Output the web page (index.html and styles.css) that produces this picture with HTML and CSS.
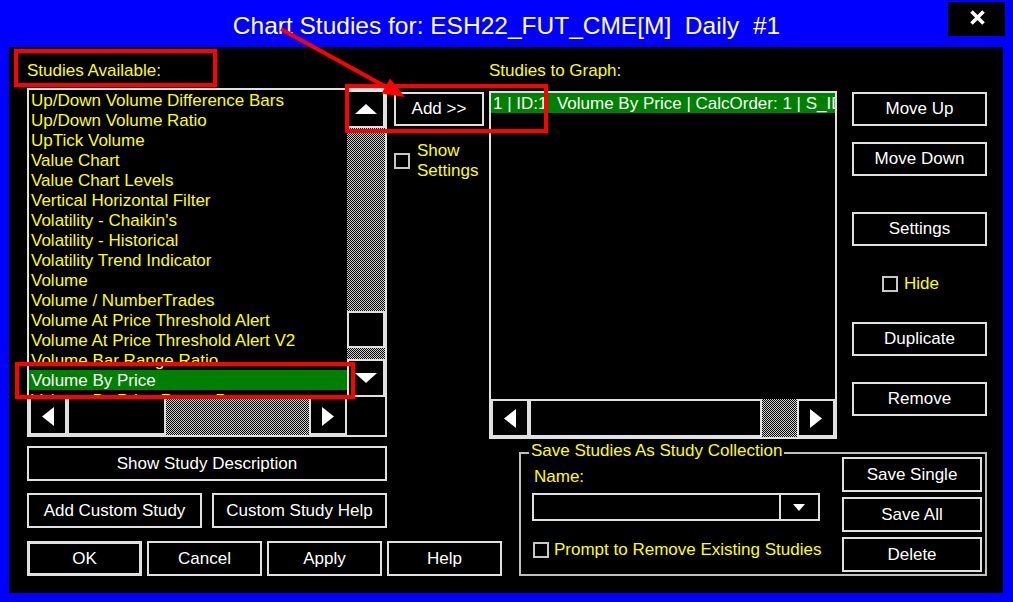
FILE: index.html
```html
<!DOCTYPE html>
<html>
<head>
<meta charset="utf-8">
<title>Chart Studies</title>
<link rel="stylesheet" href="styles.css">
</head>
<body>
<div class="window">
  <div class="titlebar">
    <div></div>
    <div class="title">Chart Studies for: ESH22_FUT_CME[M]  Daily  #1</div>
    <div class="close-cell">
      <div class="close"><svg width="17" height="15" viewBox="0 0 17 15"><path d="M2.5 1.5 L14.5 13.5 M14.5 1.5 L2.5 13.5" stroke="#fff" stroke-width="3.6" fill="none"/></svg></div>
    </div>
  </div>

  <div class="panel">
    <div class="top">
      <div class="col-left">
        <div class="label-box">Studies Available:</div>
        <div class="listbox left-list">
          <ul class="items">
            <li>Up/Down Volume Difference Bars</li>
            <li>Up/Down Volume Ratio</li>
            <li>UpTick Volume</li>
            <li>Value Chart</li>
            <li>Value Chart Levels</li>
            <li>Vertical Horizontal Filter</li>
            <li>Volatility - Chaikin's</li>
            <li>Volatility - Historical</li>
            <li>Volatility Trend Indicator</li>
            <li>Volume</li>
            <li>Volume / NumberTrades</li>
            <li>Volume At Price Threshold Alert</li>
            <li>Volume At Price Threshold Alert V2</li>
            <li>Volume Bar Range Ratio</li>
            <li class="sel">Volume By Price</li>
            <li>Volume By Price Range Percentage</li>
          </ul>
          <div class="vscroll">
            <div class="sbtn"><svg width="22" height="10" viewBox="0 0 22 10"><polygon points="11,0 22,10 0,10" fill="#fff"/></svg></div>
            <div class="track grow"></div>
            <div class="vthumb"></div>
            <div class="track vsmall"></div>
            <div class="sbtn"><svg width="22" height="10" viewBox="0 0 22 10"><polygon points="0,0 22,0 11,10" fill="#fff"/></svg></div>
          </div>
          <div class="hscroll">
            <div class="sbtn"><svg width="12" height="19" viewBox="0 0 12 19"><polygon points="12,0 12,19 0,9.5" fill="#fff"/></svg></div>
            <div class="hthumb thumb-left"></div>
            <div class="track grow"></div>
            <div class="sbtn"><svg width="12" height="19" viewBox="0 0 12 19"><polygon points="0,0 12,9.5 0,19" fill="#fff"/></svg></div>
          </div>
          <div class="corner"></div>
        </div>
      </div>

      <div class="col-mid">
        <div class="btn add-btn">Add &gt;&gt;</div>
        <div class="check-row show-settings">
          <span class="checkbox"></span>
          <span class="check-label">Show<br>Settings</span>
        </div>
      </div>

      <div class="col-graph">
        <div class="label graph-label">Studies to Graph:</div>
        <div class="listbox right-list">
          <div class="items">
            <div class="row sel">1 | ID:1  Volume By Price | CalcOrder: 1 | S_ID: 1</div>
          </div>
          <div class="hscroll">
            <div class="sbtn"><svg width="12" height="19" viewBox="0 0 12 19"><polygon points="12,0 12,19 0,9.5" fill="#fff"/></svg></div>
            <div class="hthumb thumb-wide"></div>
            <div class="track grow"></div>
            <div class="sbtn"><svg width="12" height="19" viewBox="0 0 12 19"><polygon points="0,0 12,9.5 0,19" fill="#fff"/></svg></div>
          </div>
        </div>
      </div>

      <div class="col-btns">
        <div class="btn side-btn b-moveup">Move Up</div>
        <div class="btn side-btn b-movedown">Move Down</div>
        <div class="btn side-btn b-settings">Settings</div>
        <div class="check-row hide-row">
          <span class="checkbox"></span>
          <span class="check-label">Hide</span>
        </div>
        <div class="btn side-btn b-duplicate">Duplicate</div>
        <div class="btn side-btn b-remove">Remove</div>
      </div>
    </div>

    <div class="bottom">
      <div class="bottom-left">
        <div class="btn desc-btn">Show Study Description</div>
        <div class="btn-row row-custom">
          <div class="btn custom-btn">Add Custom Study</div>
          <div class="btn custom-btn">Custom Study Help</div>
        </div>
        <div class="btn-row row-main">
          <div class="btn main-btn default">OK</div>
          <div class="btn main-btn">Cancel</div>
          <div class="btn main-btn">Apply</div>
          <div class="btn main-btn">Help</div>
        </div>
      </div>

      <div class="group">
        <span class="legend">Save Studies As Study Collection</span>
        <div class="group-left">
          <div class="label name-label">Name:</div>
          <div class="combo">
            <div class="combo-text"></div>
            <div class="combo-btn"><svg width="12" height="7" viewBox="0 0 12 7"><polygon points="0,0 12,0 6,7" fill="#fff"/></svg></div>
          </div>
          <div class="check-row prompt-row">
            <span class="checkbox"></span>
            <span class="check-label">Prompt to Remove Existing Studies</span>
          </div>
        </div>
        <div class="group-right">
          <div class="btn save-btn">Save Single</div>
          <div class="btn save-btn">Save All</div>
          <div class="btn save-btn">Delete</div>
        </div>
      </div>
    </div>
  </div>

  <svg class="annot" width="1013" height="602" viewBox="0 0 1013 602">
    <line x1="281" y1="29" x2="388" y2="88" stroke="#ff0000" stroke-width="4"/>
    <polygon points="405,97 381.5,93.5 390,78.5" fill="#ff0000"/>
  </svg>
  <div class="mark mark-add"></div>
  <div class="mark mark-vbp"></div>
</div>
</body>
</html>
```

FILE: styles.css
```css
html, body {
  margin: 0;
  padding: 0;
}
body {
  background: #0000ff;
  font-family: "Liberation Sans", Arial, sans-serif;
  font-size: 17px;
  color: #ffffff;
  overflow: hidden;
}
.window {
  position: relative;
  width: 1013px;
  height: 602px;
  background: #0000ff;
}

/* title bar */
.titlebar {
  height: 47px;
  display: grid;
  grid-template-columns: 1fr auto 1fr;
}
.title {
  padding-top: 12px;
  line-height: 28px;
  font-size: 24.5px;
  color: #ffffff;
  white-space: pre;
}
.close-cell {
  display: flex;
  justify-content: flex-end;
  align-items: flex-start;
}
.close {
  margin-top: 2px;
  margin-right: 8px;
  width: 57px;
  height: 34px;
  background: #000;
  display: flex;
  align-items: center;
  justify-content: center;
  padding-bottom: 3px;
  padding-left: 1px;
  box-sizing: border-box;
}

/* main panel */
.panel {
  margin-left: 9px;
  width: 994px;
  height: 546px;
  background: #000;
}
.top {
  display: flex;
  align-items: flex-start;
  height: 392px;
}
.label {
  color: #ffff00;
  line-height: 20px;
}

/* left column */
.col-left {
  margin-left: 5px;
  width: 373px;
}
.label-box {
  margin-top: 2px;
  width: 203px;
  height: 38px;
  box-sizing: border-box;
  border: 4px solid #ff0000;
  padding-left: 9px;
  padding-top: 5px;
  line-height: 25px;
  color: #ffff00;
}
.listbox {
  box-sizing: border-box;
  border: 2px solid #e0e0e0;
  background: #000;
  display: grid;
}
.left-list {
  margin-top: 1px;
  margin-left: 13px;
  width: 360px;
  height: 349px;
  grid-template-columns: 1fr 38px;
  grid-template-rows: 1fr 38px;
}
.items {
  list-style: none;
  margin: 0;
  padding: 0;
  overflow: hidden;
  line-height: 20px;
  color: #ffff00;
  white-space: nowrap;
}
.items li {
  padding-left: 2px;
  height: 20px;
  line-height: 21px;
}
.items .sel {
  background: #008000;
  color: #ffffff;
}

/* scrollbars */
.vscroll {
  display: flex;
  flex-direction: column;
}
.hscroll {
  display: flex;
}
.sbtn {
  box-sizing: border-box;
  width: 38px;
  height: 38px;
  flex: none;
  border: 2px solid #e0e0e0;
  background: #000;
  display: flex;
  align-items: center;
  justify-content: center;
}
.track {
  background: repeating-conic-gradient(#000 0 25%, #d0d0d0 0 50%) 0 0 / 2px 2px;
}
.track.grow {
  flex: 1;
}
.track.vsmall {
  height: 11px;
}
.vthumb {
  box-sizing: border-box;
  height: 37px;
  border: 2px solid #e0e0e0;
  background: #000;
}
.hthumb {
  box-sizing: border-box;
  height: 38px;
  border: 2px solid #e0e0e0;
  background: #000;
  flex: none;
}
.thumb-left {
  width: 99px;
}
.thumb-wide {
  width: 233px;
}
.corner {
  background: #000;
}

/* middle column */
.col-mid {
  margin-left: 7px;
  width: 90px;
}
.btn {
  box-sizing: border-box;
  border: 2px solid #e0e0e0;
  background: #000;
  color: #fff;
  text-align: center;
  white-space: nowrap;
}
.add-btn {
  margin-top: 45px;
  height: 34px;
  line-height: 30px;
}
.check-row {
  display: flex;
  align-items: center;
  color: #ffff00;
  line-height: 20px;
  white-space: nowrap;
}
.checkbox {
  box-sizing: border-box;
  width: 16px;
  height: 16px;
  border: 2px solid #c8c8c8;
  background: #000;
  flex: none;
}
.show-settings {
  margin-top: 15px;
  gap: 7px;
}

/* right list column */
.col-graph {
  margin-left: 5px;
  width: 348px;
}
.graph-label {
  margin-top: 14px;
}
.right-list {
  margin-top: 10px;
  width: 348px;
  height: 348px;
  grid-template-rows: 1fr 38px;
}
.right-list .row {
  padding-left: 2px;
  height: 20px;
  line-height: 21px;
  white-space: pre;
  overflow: hidden;
}

/* buttons column */
.col-btns {
  margin-left: 15px;
  width: 135px;
}
.side-btn {
  height: 34px;
  line-height: 30px;
}
.b-moveup { margin-top: 45px; }
.b-movedown { margin-top: 16px; }
.b-settings { margin-top: 36px; }
.hide-row {
  margin-top: 28px;
  padding-left: 30px;
  gap: 6px;
}
.b-duplicate { margin-top: 28px; }
.b-remove { margin-top: 26px; }

/* bottom section */
.bottom {
  display: flex;
  align-items: flex-start;
  margin-top: 7px;
}
.bottom-left {
  margin-left: 18px;
  width: 475px;
}
.desc-btn {
  width: 360px;
  height: 35px;
  line-height: 31px;
}
.btn-row {
  display: flex;
}
.row-custom {
  margin-top: 12px;
  gap: 10px;
}
.custom-btn {
  width: 175px;
  height: 35px;
  line-height: 31px;
}
.row-main {
  margin-top: 13px;
  gap: 5px;
}
.main-btn {
  width: 115px;
  height: 35px;
  line-height: 31px;
}
.main-btn.default {
  border-width: 3px;
  line-height: 29px;
}

/* group box */
.group {
  position: relative;
  margin-left: 17px;
  margin-top: 6px;
  width: 468px;
  height: 124px;
  box-sizing: border-box;
  border: 2px solid #c0c0c0;
  padding: 0 3px 0 11px;
  display: flex;
  justify-content: space-between;
}
.legend {
  position: absolute;
  top: -13px;
  left: 8px;
  padding: 0 2px;
  background: #000;
  color: #ffff00;
  line-height: 20px;
  white-space: nowrap;
}
.group-left {
  width: 288px;
}
.name-label {
  margin-top: 13px;
  padding-left: 2px;
}
.combo {
  margin-top: 6px;
  height: 28px;
  box-sizing: border-box;
  border: 2px solid #e0e0e0;
  display: flex;
}
.combo-text {
  flex: 1;
}
.combo-btn {
  box-sizing: border-box;
  width: 38px;
  margin: 0 1px 0 0;
  border-left: 2px solid #e0e0e0;
  display: flex;
  align-items: center;
  justify-content: center;
}
.prompt-row {
  margin-top: 19px;
  padding-left: 1px;
  gap: 5px;
}
.group-right {
  width: 140px;
  padding-top: 3px;
  display: flex;
  flex-direction: column;
  gap: 5px;
}
.save-btn {
  height: 35px;
  line-height: 31px;
}

/* annotations */
.annot {
  position: absolute;
  left: 0;
  top: 0;
  pointer-events: none;
}
.mark {
  position: absolute;
  box-sizing: border-box;
  border: 4px solid #ff0000;
  pointer-events: none;
}
.mark-add {
  left: 345px;
  top: 84px;
  width: 203px;
  height: 49px;
}
.mark-vbp {
  left: 15px;
  top: 362px;
  width: 340px;
  height: 37px;
}
```
